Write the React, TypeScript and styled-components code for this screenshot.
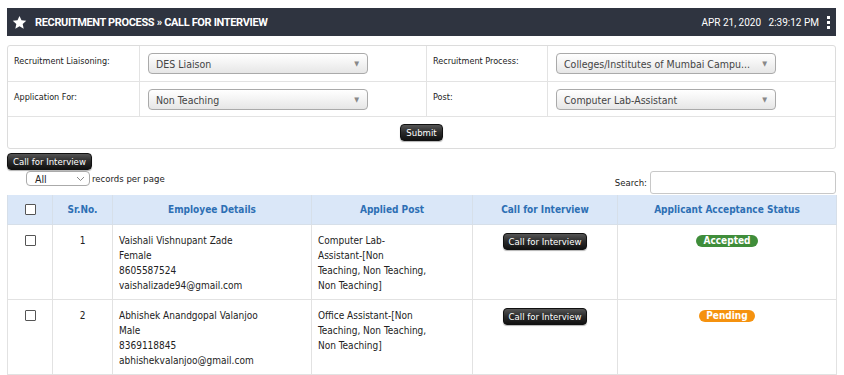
import React from "react";
import styled, { createGlobalStyle } from "styled-components";

const Global = createGlobalStyle`
  html, body { margin: 0; padding: 0; background: #fff; }
  body { font-family: "DejaVu Sans Condensed", "DejaVu Sans", sans-serif; font-size: 10px; color: #222; }
  * { box-sizing: border-box; }
`;

const Page = styled.div`
  padding: 8px 8px 0 7px;
  width: 844px;
`;

const HeaderBar = styled.div`
  height: 28px;
  background: #2f3440;
  display: flex;
  align-items: center;
  padding: 0 6px 0 5px;
  color: #fff;
`;

const Title = styled.div`
  display: flex;
  align-items: center;
  gap: 8px;
  font-family: "Roboto", sans-serif;
  font-weight: 700;
  font-size: 11px;
  letter-spacing: -0.35px;
  flex: 1;
`;

const DateText = styled.div`
  font-family: "Roboto", sans-serif;
  font-size: 10px;
  white-space: pre;
  margin-right: 8px;
`;

const Kebab = styled.div`
  display: flex;
  flex-direction: column;
  gap: 2px;
  span { width: 3px; height: 3px; background: #fff; display: block; }
`;

const FormPanel = styled.div`
  margin-top: 9px;
  border: 1px solid #dcdcdc;
  border-radius: 3px;
  display: grid;
  grid-template-columns: 132px 287px 121px 1fr;
  grid-template-rows: 36px 35px 31px;
`;

const Cell = styled.div<{ $last?: boolean; $lastRow?: boolean }>`
  border-right: ${(p) => (p.$last ? "none" : "1px solid #e3e3e3")};
  border-bottom: ${(p) => (p.$lastRow ? "none" : "1px solid #e3e3e3")};
  padding: 10px 6px 8px;
  font-size: 9px;
`;

const SelectCell = styled(Cell)`
  padding: 7px 8px;
`;

const FullCell = styled.div`
  grid-column: 1 / -1;
  display: flex;
  justify-content: center;
  align-items: center;
`;

const FakeSelect = styled.div<{ $w: number }>`
  width: ${(p) => p.$w}px;
  height: 21px;
  border: 1px solid #aaa;
  border-radius: 4px;
  background: linear-gradient(#ffffff 0%, #f3f3f3 50%, #e6e6e6 100%);
  display: flex;
  align-items: center;
  padding: 0 8px 0 7px;
  font-size: 10.5px;
  color: #444;
  font-family: "DejaVu Sans Condensed", sans-serif;
  span { flex: 1; white-space: nowrap; overflow: hidden; }
  i { font-style: normal; font-size: 7px; color: #888; margin-left: 6px; }
`;

const DarkButton = styled.button<{ $h?: number }>`
  height: ${(p) => p.$h ?? 17}px;
  padding: 0 5px;
  background: linear-gradient(#555 0%, #2a2a2a 50%, #111 100%);
  color: #fff;
  border: 1px solid #111;
  border-radius: 4px;
  font-family: "DejaVu Sans Condensed", sans-serif;
  font-size: 9.5px;
  cursor: pointer;
  box-shadow: 0 1px 1px rgba(0,0,0,0.3);
`;

const ToolsRow = styled.div`
  margin-top: 4px;
`;

const LengthRow = styled.div`
  display: flex;
  align-items: flex-end;
  justify-content: space-between;
  margin-top: 1px;
`;

const LengthLeft = styled.div`
  display: flex;
  align-items: center;
  gap: 2px;
  padding-left: 19px;
  font-size: 9.5px;
  align-self: flex-start;
`;

const SmallSelect = styled.div`
  width: 64px;
  height: 15px;
  border: 1px solid #aaa;
  border-radius: 4px;
  display: flex;
  align-items: center;
  padding: 0 4px 0 8px;
  font-size: 10.5px;
  span { flex: 1; }
`;

const SearchBox = styled.div`
  display: flex;
  align-items: center;
  gap: 3px;
  font-size: 9.5px;
`;

const SearchInput = styled.div`
  width: 186px;
  height: 23px;
  border: 1px solid #c8c8c8;
  border-radius: 3px;
`;

const Table = styled.table`
  width: 829px;
  border-collapse: collapse;
  table-layout: fixed;
  margin-top: 1px;
`;

const Th = styled.th<{ $w: number }>`
  width: ${(p) => p.$w}px;
  height: 29px;
  background: #dae7f8;
  color: #2d6fb4;
  font-weight: 700;
  font-size: 10px;
  border: 1px solid #d6dfe9;
  border-top: none;
  padding: 0;
  text-align: center;
`;

const Td = styled.td<{ $center?: boolean }>`
  border: 1px solid #e2e2e2;
  vertical-align: top;
  padding: 8px 6px 6px;
  line-height: 15px;
  font-size: 10px;
  text-align: ${(p) => (p.$center ? "center" : "left")};
  color: #222;
`;

const Check = styled.span`
  display: inline-block;
  width: 11px;
  height: 11px;
  border: 1px solid #555;
  border-radius: 1px;
  background: #fff;
  vertical-align: middle;
`;

const Badge = styled.span<{ $color: string }>`
  display: inline-block;
  background: ${(p) => p.$color};
  color: #fff;
  font-weight: 700;
  font-size: 10px;
  line-height: 12px;
  padding: 0 7px;
  border-radius: 7px;
`;

const Star = () => (
  <svg width="15" height="15" viewBox="0 0 24 24">
    <path
      d="M12 1.5l3.2 7 7.6.8-5.7 5.1 1.6 7.5L12 18l-6.7 3.9 1.6-7.5L1.2 9.3l7.6-.8z"
      fill="#fff"
    />
  </svg>
);

const rows = [
  {
    n: 1,
    details: ["Vaishali Vishnupant Zade", "Female", "8605587524", "vaishalizade94@gmail.com"],
    post: ["Computer Lab-", "Assistant-[Non", "Teaching, Non Teaching,", "Non Teaching]"],
    status: "Accepted",
    color: "#3f8d3a",
  },
  {
    n: 2,
    details: ["Abhishek Anandgopal Valanjoo", "Male", "8369118845", "abhishekvalanjoo@gmail.com"],
    post: ["Office Assistant-[Non", "Teaching, Non Teaching,", "Non Teaching]"],
    status: "Pending",
    color: "#f5920f",
  },
];

export default function App() {
  return (
    <Page>
      <Global />
      <HeaderBar>
        <Title>
          <Star />
          <span>RECRUITMENT PROCESS » CALL FOR INTERVIEW</span>
        </Title>
        <DateText>APR 21, 2020   2:39:12 PM</DateText>
        <Kebab>
          <span />
          <span />
          <span />
        </Kebab>
      </HeaderBar>

      <FormPanel>
        <Cell>Recruitment Liaisoning:</Cell>
        <SelectCell>
          <FakeSelect $w={220}>
            <span>DES Liaison</span>
            <i>▼</i>
          </FakeSelect>
        </SelectCell>
        <Cell>Recruitment Process:</Cell>
        <SelectCell $last>
          <FakeSelect $w={220}>
            <span>Colleges/Institutes of Mumbai Campu...</span>
            <i>▼</i>
          </FakeSelect>
        </SelectCell>
        <Cell>Application For:</Cell>
        <SelectCell>
          <FakeSelect $w={220}>
            <span>Non Teaching</span>
            <i>▼</i>
          </FakeSelect>
        </SelectCell>
        <Cell>Post:</Cell>
        <SelectCell $last>
          <FakeSelect $w={220}>
            <span>Computer Lab-Assistant</span>
            <i>▼</i>
          </FakeSelect>
        </SelectCell>
        <FullCell>
          <DarkButton>Submit</DarkButton>
        </FullCell>
      </FormPanel>

      <ToolsRow>
        <DarkButton>Call for Interview</DarkButton>
      </ToolsRow>
      <LengthRow>
        <LengthLeft>
          <SmallSelect>
            <span>All</span>
            <svg width="9" height="6" viewBox="0 0 9 6">
              <path d="M1 1l3.5 3.5L8 1" stroke="#888" fill="none" strokeWidth="1" />
            </svg>
          </SmallSelect>
          records per page
        </LengthLeft>
        <SearchBox>
          Search:
          <SearchInput />
        </SearchBox>
      </LengthRow>

      <Table>
        <thead>
          <tr>
            <Th $w={45}>
              <Check />
            </Th>
            <Th $w={60}>Sr.No.</Th>
            <Th $w={199}>Employee Details</Th>
            <Th $w={161}>Applied Post</Th>
            <Th $w={145}>Call for Interview</Th>
            <Th $w={219}>Applicant Acceptance Status</Th>
          </tr>
        </thead>
        <tbody>
          {rows.map((r) => (
            <tr key={r.n}>
              <Td $center>
                <Check />
              </Td>
              <Td $center>{r.n}</Td>
              <Td>
                {r.details.map((d) => (
                  <div key={d}>{d}</div>
                ))}
              </Td>
              <Td>
                {r.post.map((d) => (
                  <div key={d}>{d}</div>
                ))}
              </Td>
              <Td $center>
                <DarkButton $h={17}>Call for Interview</DarkButton>
              </Td>
              <Td $center>
                <Badge $color={r.color}>{r.status}</Badge>
              </Td>
            </tr>
          ))}
        </tbody>
      </Table>
    </Page>
  );
}
